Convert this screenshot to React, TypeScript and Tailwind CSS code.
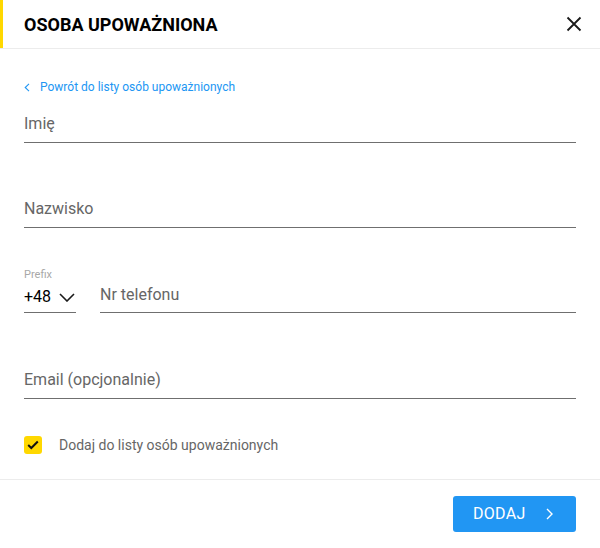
import React from "react";

function Field({ label, className = "" }: { label: string; className?: string }) {
  return (
    <div className={`border-b border-[#6f6f6f] pb-[6px] ${className}`}>
      <div className="text-[16px] leading-[24px] text-[#666666]">{label}</div>
    </div>
  );
}

export default function App() {
  return (
    <div className="w-[600px] h-[548px] bg-white flex flex-col" style={{ fontFamily: "Roboto, 'Liberation Sans', sans-serif" }}>
      <div className="h-[49px] flex items-center border-b border-[#ececec] relative shrink-0">
        <div className="absolute left-0 top-0 w-[3px] h-[48px] bg-[#ffd800]" />
        <div className="pl-6 text-[18px] font-bold text-black">OSOBA UPOWAŻNIONA</div>
        <button className="ml-auto mr-[17px] w-[18px] h-[18px] flex items-center justify-center">
          <svg width="16" height="16" viewBox="0 0 16 16" fill="none" stroke="#1a1a1a" strokeWidth="1.8">
            <path d="M1.5 1.5 L14.5 14.5 M14.5 1.5 L1.5 14.5" />
          </svg>
        </button>
      </div>
      <div className="px-6 flex flex-col flex-1">
        <div className="mt-[30px] flex items-center gap-[10px] text-[12px] leading-[16px] text-[#2196f3]">
          <svg width="6" height="9" viewBox="0 0 6 9" fill="none" stroke="#2196f3" strokeWidth="1.1">
            <path d="M5 0.8 L1.2 4.5 L5 8.2" />
          </svg>
          <span>Powrót do listy osób upoważnionych</span>
        </div>
        <Field label="Imię" className="mt-[17px]" />
        <Field label="Nazwisko" className="mt-[54px]" />
        <div className="mt-[40px] flex items-end">
          <div className="w-[52px] border-b border-[#6f6f6f] pb-[3px]">
            <div className="text-[11px] leading-[14px] text-[#a8a8a8]">Prefix</div>
            <div className="flex items-center mt-[3px] text-[16px] leading-[24px] text-black">
              <span>+48</span>
              <svg className="ml-[8px]" width="16" height="9" viewBox="0 0 16 9" fill="none" stroke="#1a1a1a" strokeWidth="1.6">
                <path d="M1 1 L8 8 L15 1" />
              </svg>
            </div>
          </div>
          <div className="ml-6 flex-1 border-b border-[#6f6f6f] pb-[5px]">
            <div className="text-[16px] leading-[24px] text-[#666666]">Nr telefonu</div>
          </div>
        </div>
        <Field label="Email (opcjonalnie)" className="mt-[55px]" />
        <div className="mt-[37px] flex items-center">
          <div className="w-[18px] h-[18px] rounded-[3px] bg-[#ffd800] flex items-center justify-center">
            <svg width="12" height="10" viewBox="0 0 12 10" fill="none" stroke="#111" strokeWidth="2">
              <path d="M1.2 5 L4.3 8 L10.8 1.5" />
            </svg>
          </div>
          <span className="ml-[17px] text-[14px] leading-[18px] text-[#666666]">Dodaj do listy osób upoważnionych</span>
        </div>
      </div>
      <div className="h-[69px] border-t border-[#ececec] flex items-start justify-end pr-6 pt-[16px] shrink-0">
        <button className="w-[123px] h-[36px] rounded-[3px] bg-[#2196f3] text-white flex items-center pl-[20px] pr-[23px]">
          <span className="text-[16px] leading-[20px] font-normal tracking-[0.3px]">DODAJ</span>
          <svg className="ml-auto" width="7" height="12" viewBox="0 0 7 12" fill="none" stroke="#fff" strokeWidth="1.4">
            <path d="M1 1 L6 6 L1 11" />
          </svg>
        </button>
      </div>
    </div>
  );
}
